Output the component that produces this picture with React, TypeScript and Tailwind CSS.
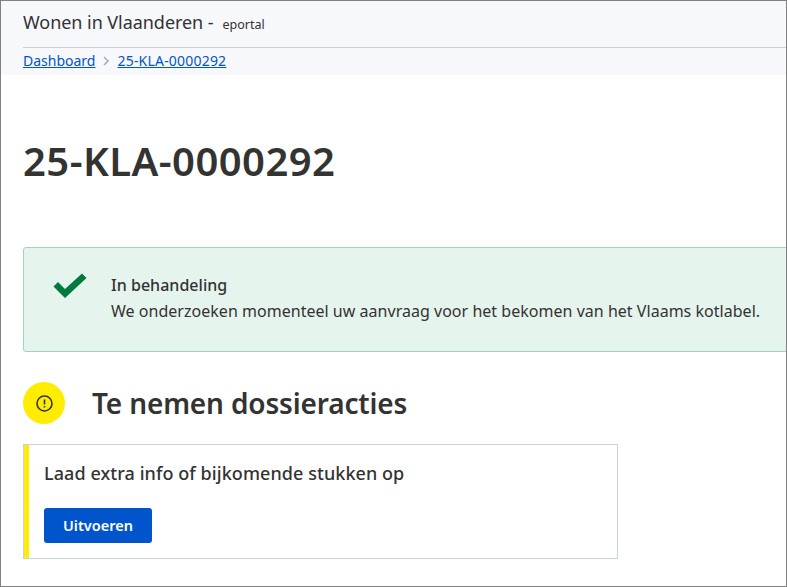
import React from 'react';

const font = { fontFamily: '"Noto Sans", sans-serif' };

const App: React.FC = () => {
  return (
    <div
      className="w-[787px] h-[587px] overflow-hidden bg-white border border-[#808080] text-[#333332]"
      style={font}
    >
      {/* Header */}
      <header className="h-[74px] bg-[#f7f8fc] pl-[22px]">
        <div className="h-[46px] flex items-baseline pt-[8px] whitespace-nowrap">
          <span className="text-[18px] leading-[26px] tracking-[-0.05px]">Wonen in Vlaanderen -</span>
          <span className="text-[12.5px] leading-[26px] ml-[9px]">eportal</span>
        </div>
        <div className="border-t border-[#cbd2da] h-[28px] flex items-center pb-[2px] text-[14px] text-[#0055cc]">
          <a href="#" className="underline">Dashboard</a>
          <svg viewBox="0 0 6 10" className="w-[6px] h-[10px] mx-[8px] text-[#a9afb6]" fill="none" stroke="currentColor" strokeWidth="1.6">
            <path d="M1 1l4 4-4 4" />
          </svg>
          <a href="#" className="underline tracking-[0.2px]">25-KLA-0000292</a>
        </div>
      </header>

      <main className="pl-[22px]">
        <h1 className="mt-[61px] text-[40px] leading-[50px] font-semibold tracking-[0.45px]">25-KLA-0000292</h1>

        {/* Status */}
        <section className="mt-[61px] w-[800px] h-[105px] bg-[#e6f4ee] border border-[#a0d5bb] rounded-[3px] flex">
          <svg viewBox="0 0 34 26" className="w-[34px] h-[26px] ml-[29px] mt-[25px] shrink-0 text-[#007a3d]" fill="currentColor">
            <path d="M0.500 13.500 5 9l7 7L29 0.500l4.500 4.500L12 25z" />
          </svg>
          <div className="ml-[24px] mt-[24px] whitespace-nowrap text-[16px] leading-[26px] tracking-[0.025px]">
            <p className="font-medium">In behandeling</p>
            <p>We onderzoeken momenteel uw aanvraag voor het bekomen van het Vlaams kotlabel.</p>
          </div>
        </section>

        {/* Actions heading */}
        <div className="mt-[30px] flex items-center">
          <div className="w-[42px] h-[42px] rounded-full bg-[#ffed00] flex items-center justify-center">
            <svg viewBox="0 0 17 17" className="w-[17px] h-[17px]" fill="none" stroke="currentColor" strokeWidth="1.600">
              <circle cx="8.500" cy="8.500" r="7.500" />
              <path d="M8.500 4.500v5M8.500 11v1.500" />
            </svg>
          </div>
          <h2 className="ml-[27px] text-[28px] leading-[42px] font-semibold tracking-[-0.15px]">Te nemen dossieracties</h2>
        </div>

        {/* Action card */}
        <section className="mt-[20px] w-[595px] h-[115px] border border-[#cbd2da]">
          <div className="h-full border-l-[5px] border-l-[#ffed00] pl-[15px]">
            <h3 className="pt-[15px] text-[18px] leading-[26px] font-medium tracking-[0.07px]">Laad extra info of bijkomende stukken op</h3>
            <button className="mt-[22px] w-[108px] h-[35px] rounded-[3px] bg-[#0055cc] text-white text-[14.5px] font-semibold">Uitvoeren</button>
          </div>
        </section>
      </main>
    </div>
  );
};

export default App;
